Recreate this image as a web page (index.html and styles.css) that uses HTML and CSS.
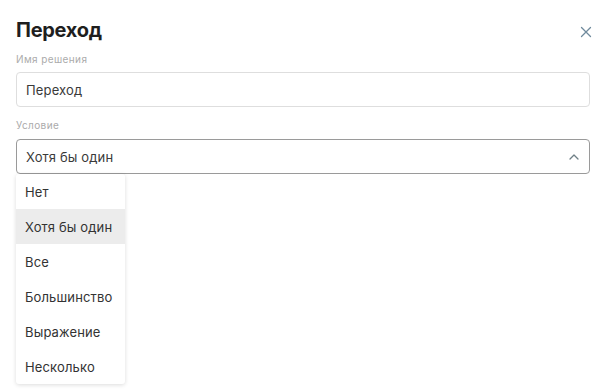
FILE: index.html
```html
<!DOCTYPE html>
<html lang="ru">
<head>
<meta charset="utf-8">
<link rel="stylesheet" href="styles.css">
</head>
<body>
<div class="dialog">
  <div class="header">
    <h1 class="title">Переход</h1>
    <button class="close" aria-label="Закрыть">
      <svg width="12" height="12" viewBox="0 0 12 12"><path d="M1.5 1.5 L10.5 10.5 M10.5 1.5 L1.5 10.5" stroke="#6f8a9c" stroke-width="1.3" stroke-linecap="round"/></svg>
    </button>
  </div>
  <div class="field">
    <div class="label">Имя решения</div>
    <div class="input">Переход</div>
  </div>
  <div class="field field2">
    <div class="label">Условие</div>
    <div class="select-wrap">
      <div class="input select">
        <span>Хотя бы один</span>
        <svg width="10" height="6" viewBox="0 0 10 6"><path d="M1 5 L5 1 L9 5" fill="none" stroke="#6f7f86" stroke-width="1.3" stroke-linecap="round" stroke-linejoin="round"/></svg>
      </div>
      <ul class="menu">
        <li class="item">Нет</li>
        <li class="item active">Хотя бы один</li>
        <li class="item">Все</li>
        <li class="item">Большинство</li>
        <li class="item">Выражение</li>
        <li class="item">Несколько</li>
      </ul>
    </div>
  </div>
</div>
</body>
</html>
```

FILE: styles.css
```css
* { box-sizing: border-box; }
html, body { margin: 0; padding: 0; background: #fff; }
body { font-family: Inter, "Noto Sans", sans-serif; color: #2b2b2b; }
.dialog { padding: 16px 17px 0 16px; width: 607px; height: 392px; }
.header { display: flex; justify-content: space-between; align-items: flex-start; height: 32px; }
.title { margin: 2px 0 0; font-size: 20px; font-weight: 700; color: #1e1e1e; line-height: 24px; letter-spacing: -0.3px; }
.close { border: 0; background: none; padding: 0; width: 12px; height: 12px; margin-right: -2px; margin-top: 10px; display: flex; }
.field { display: flex; flex-direction: column; }
.label { font-size: 10px; line-height: 12px; color: #ababab; letter-spacing: 0.4px; margin-top: 5px; margin-bottom: 7px; }
.input { height: 35px; border: 1px solid #dedede; border-radius: 4px; font-size: 13px; letter-spacing: 0.15px; color: #3a3a3a; padding: 0 9px; display: flex; align-items: center; }
.field2 .label { margin-top: 12px; margin-bottom: 8px; }
.select-wrap { position: relative; }
.select { border-color: #9a9a9a; justify-content: space-between; padding-right: 10px; }
.menu { position: absolute; left: 0; top: 35px; margin: 0; padding: 0; list-style: none; width: 109px; background: #fff; box-shadow: 0 1px 4px rgba(0,0,0,0.14); border-radius: 3px; }
.item { height: 35px; display: flex; align-items: center; padding-left: 9px; font-size: 13px; letter-spacing: 0.15px; color: #333; }
.item.active { background: #ececec; }
```
